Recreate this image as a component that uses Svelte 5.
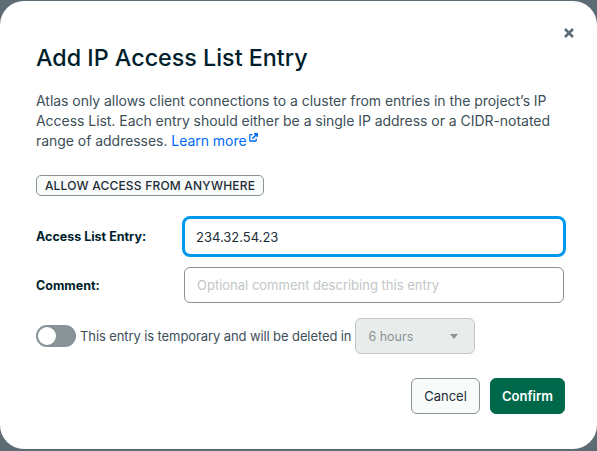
<script>
	let entry = $state('234.32.54.23');
	let comment = $state('');
	let temporary = $state(false);
</script>

<div class="backdrop">
	<div class="modal">
		<button class="close" aria-label="Close">
			<svg width="12" height="12" viewBox="0 0 12 12"><path d="M2 2l8 8M10 2l-8 8" /></svg>
		</button>

		<h1>Add IP Access List Entry</h1>

		<p class="intro">
			Atlas only allows client connections to a cluster from entries in the project’s IP
			Access List. Each entry should either be a single IP address or a CIDR-notated
			range of addresses. <a href="#learn">Learn more<svg class="ext" width="9" height="9" viewBox="0 0 9 9"><path class="box" d="M3.5 1.6H1.4a.6.6 0 0 0-.6.6v5.2c0 .3.3.6.6.6h5.2c.3 0 .6-.3.6-.6V5.4" /><path class="arrow" d="M3.4 5.6L7.6 1.4M5 .8h3.2V4" /></svg></a>
		</p>

		<button class="anywhere">ALLOW ACCESS FROM ANYWHERE</button>

		<div class="fields">
			<label class="row">
				<span class="label">Access List Entry:</span>
				<input class="focused" type="text" bind:value={entry} />
			</label>
			<label class="row">
				<span class="label">Comment:</span>
				<input type="text" placeholder="Optional comment describing this entry" bind:value={comment} />
			</label>
		</div>

		<div class="temp">
			<button class="toggle" aria-label="Temporary" onclick={() => (temporary = !temporary)}><span class="knob"></span></button>
			<span class="temp-text">This entry is temporary and will be deleted in</span>
			<div class="select">
				<span>6 hours</span>
				<span class="caret"></span>
			</div>
		</div>

		<div class="footer">
			<button class="cancel">Cancel</button>
			<button class="confirm">Confirm</button>
		</div>
	</div>
</div>

<style>
	:global(body) {
		margin: 0;
		background: #5d6c74;
	}
	.backdrop {
		height: 451px;
		padding: 1px 0 2px;
		box-sizing: border-box;
		overflow: hidden;
		font-family: Inter, "Open Sans", sans-serif;
		color: #1c2d38;
	}
	.modal {
		position: relative;
		height: 448px;
		box-sizing: border-box;
		padding: 41px 32px 0 36px;
		background: #fff;
		border-radius: 24px;
	}
	.close {
		position: absolute;
		top: 26px;
		right: 22px;
		width: 12px;
		height: 12px;
		padding: 0;
		border: 0;
		background: none;
		display: flex;
	}
	.close path {
		stroke: #5d6c74;
		stroke-width: 2.6;
		fill: none;
	}
	h1 {
		margin: 0;
		font-size: 23.3px;
		line-height: 32px;
		font-weight: 500;
		color: #001e2b;
	}
	.intro {
		margin: 17px 0 0;
		font-size: 14px;
		letter-spacing: -0.04px;
		line-height: 20px;
		color: #3d4f58;
	}
	.intro a {
		color: #016bf8;
		text-decoration: none;
	}
	.ext {
		margin-left: 2px;
		vertical-align: 4px;
	}
	.ext path {
		fill: none;
		stroke: #016bf8;
	}
	.ext .box { stroke-width: 1.3; }
	.ext .arrow { stroke-width: 1.5; }
	.anywhere {
		display: block;
		margin-top: 24px;
		width: 228px;
		height: 21px;
		padding: 0;
		border: 1px solid #889397;
		border-radius: 5px;
		background: #f9fbfa;
		font-family: inherit;
		font-size: 12px;
		font-weight: 500;
		letter-spacing: 0.2px;
		color: #1c2d38;
		text-align: center;
	}
	.fields {
		margin-top: 20px;
		display: flex;
		flex-direction: column;
		gap: 10px;
	}
	.row {
		display: flex;
		align-items: center;
	}
	.label {
		width: 148px;
		flex: none;
		font-size: 12.5px;
		font-weight: 700;
		color: #001e2b;
	}
	input {
		width: 380px;
		height: 36px;
		box-sizing: border-box;
		padding: 0 12px;
		border: 1px solid #889397;
		border-radius: 6px;
		font-family: inherit;
		font-size: 13px;
		color: #1c2d38;
		background: #fff;
		outline: none;
	}
	input::placeholder {
		color: #c1c7c6;
	}
	.focused {
		width: 384px;
		height: 41px;
		margin: 0 -2px;
		border: 3px solid #0498ec;
		border-radius: 8px;
		padding: 0 11px;
	}
	.row:first-child .label {
		margin-right: 2px;
		width: 146px;
	}
	.temp {
		margin-top: 15px;
		display: flex;
		align-items: center;
	}
	.toggle {
		width: 40px;
		height: 22px;
		padding: 0;
		border: 0;
		border-radius: 11px;
		background: #889397;
		display: flex;
		align-items: center;
		flex: none;
	}
	.knob {
		width: 18px;
		height: 18px;
		margin-left: 2px;
		border-radius: 50%;
		background: #fff;
	}
	.temp-text {
		margin-left: 4px;
		font-size: 13px;
		color: #3d4f58;
		letter-spacing: -0.1px;
		white-space: nowrap;
	}
	.select {
		margin-left: 4px;
		width: 120px;
		height: 36px;
		box-sizing: border-box;
		padding: 0 12px;
		display: flex;
		align-items: center;
		justify-content: space-between;
		flex: none;
		border: 1px solid #c1c7c6;
		border-radius: 6px;
		background: #e8edeb;
		font-size: 12.5px;
		color: #889397;
	}
	.caret {
		margin-right: 4px;
		width: 0;
		height: 0;
		border-left: 4px solid transparent;
		border-right: 4px solid transparent;
		border-top: 5px solid #889397;
	}
	.footer {
		margin-top: 24px;
		display: flex;
		justify-content: flex-end;
		gap: 10px;
	}
	.footer button {
		height: 36px;
		padding: 0;
		border-radius: 6px;
		font-family: inherit;
		font-size: 13px;
	}
	.cancel {
		width: 69px;
		border: 1px solid #889397;
		background: #f9fbfa;
		color: #1c2d38;
	}
	.confirm {
		width: 75px;
		border: 1px solid #00684a;
		background: #00684a;
		color: #fff;
		font-weight: 600;
	}
</style>
